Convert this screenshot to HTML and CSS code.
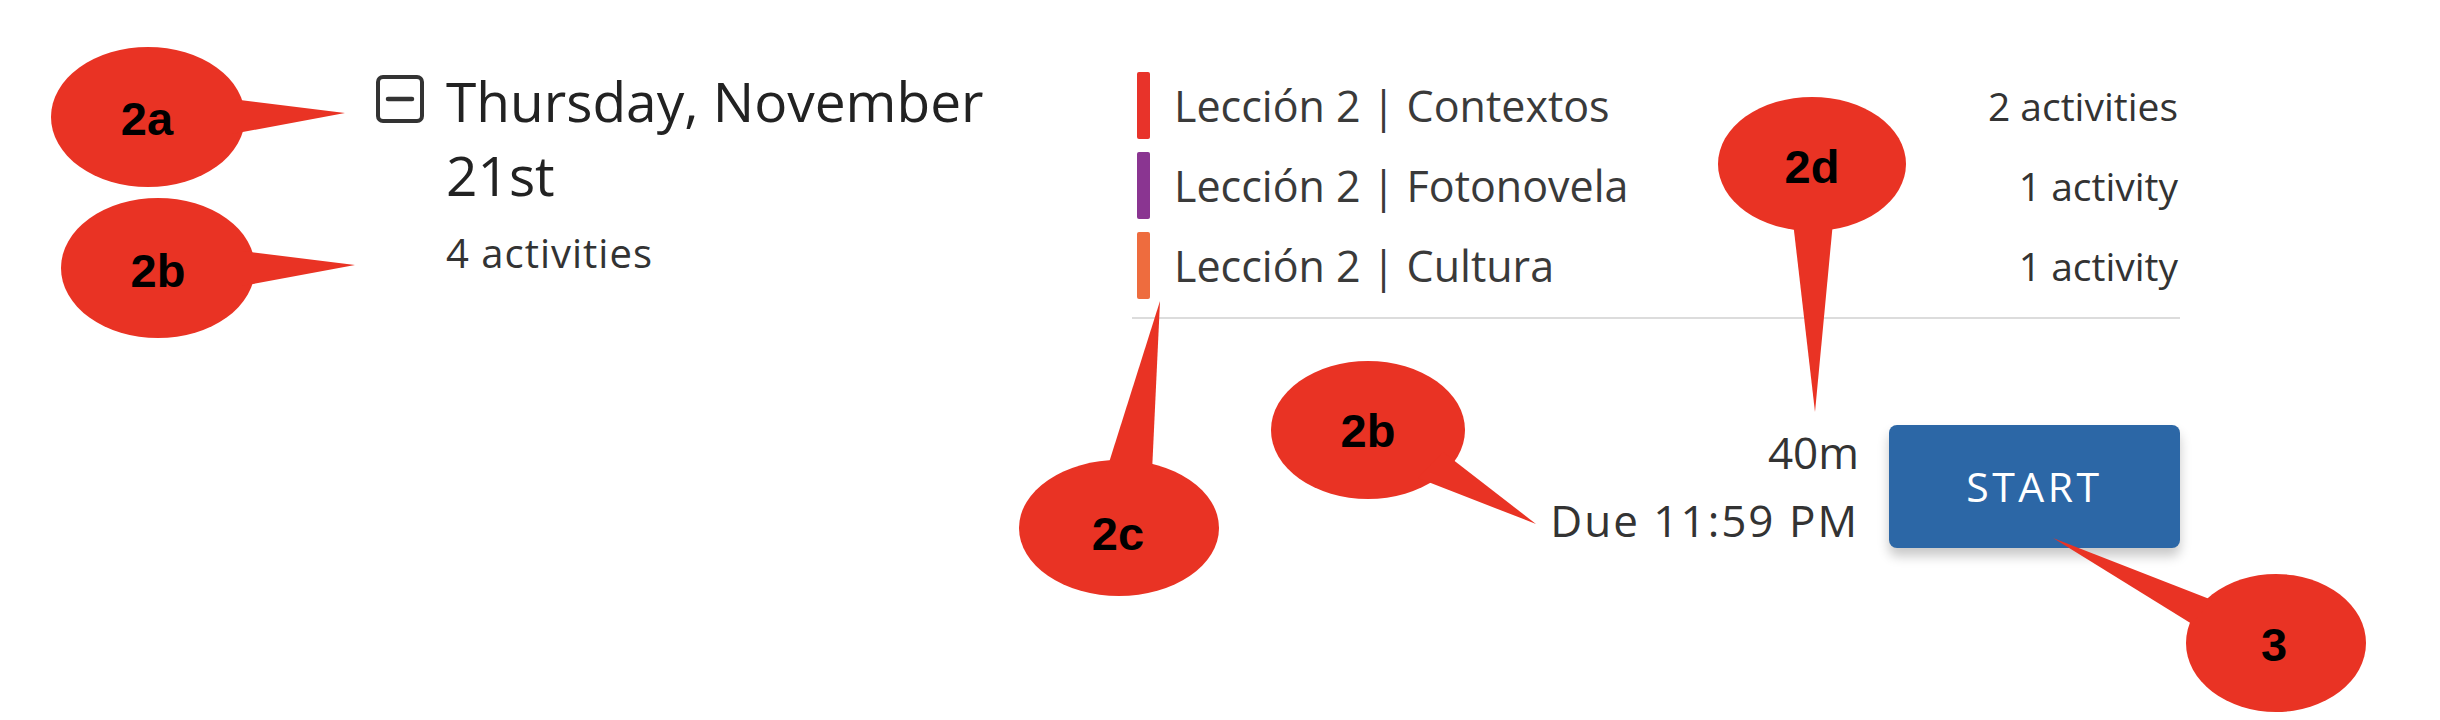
FILE: index.html
```html
<!DOCTYPE html>
<html lang="en">
<head>
<meta charset="utf-8">
<title>Assignment day</title>
<link rel="stylesheet" href="styles.css">
</head>
<body>
<div class="page">
  <section class="day">
    <div class="day-head">
      <svg class="toggle" viewBox="0 0 48 48" width="48" height="48" aria-hidden="true">
        <rect x="2" y="2" width="44" height="44" rx="5" ry="5" fill="none" stroke="#333" stroke-width="4"/>
        <line x1="12" y1="24" x2="36" y2="24" stroke="#333" stroke-width="4.5" stroke-linecap="round"/>
      </svg>
      <div class="head-text">
        <h2 class="title">Thursday, November 21st</h2>
        <div class="count">4 activities</div>
      </div>
    </div>
    <div class="lessons">
      <ul class="rows">
        <li class="row"><span class="bar bar-red"></span><span class="name">Lección 2 | Contextos</span><span class="num">2 activities</span></li>
        <li class="row"><span class="bar bar-purple"></span><span class="name">Lección 2 | Fotonovela</span><span class="num">1 activity</span></li>
        <li class="row"><span class="bar bar-orange"></span><span class="name">Lección 2 | Cultura</span><span class="num">1 activity</span></li>
      </ul>
      <div class="divider"></div>
      <div class="footer">
        <div class="meta">
          <div class="time">40m</div>
          <div class="due">Due 11:59 PM</div>
        </div>
        <button class="start">START</button>
      </div>
    </div>
  </section>

  <svg class="callouts" viewBox="0 0 2440 720" width="2440" height="720" aria-hidden="true">
    <g class="bubbles">
      <ellipse cx="148" cy="117" rx="97" ry="70"/>
      <polygon points="232,99 345,113 232,134"/>
      <ellipse cx="158" cy="268" rx="97" ry="70"/>
      <polygon points="242,251 355,265 242,286"/>
      <ellipse cx="1812" cy="164" rx="94" ry="67"/>
      <polygon points="1793,222 1815,412 1833,222"/>
      <ellipse cx="1119" cy="528" rx="100" ry="68"/>
      <polygon points="1106,472 1160,301 1152,472"/>
      <ellipse cx="1368" cy="430" rx="97" ry="69"/>
      <polygon points="1443,452 1536,524 1418,478"/>
      <ellipse cx="2276" cy="643" rx="90" ry="69"/>
      <polygon points="2212,600 2053,538 2192,624"/>
    </g>
    <g class="labels">
      <text x="147" y="135">2a</text>
      <text x="158" y="287">2b</text>
      <text x="1812" y="183">2d</text>
      <text x="1118" y="550">2c</text>
      <text x="1368" y="447">2b</text>
      <text x="2274" y="661">3</text>
    </g>
  </svg>
</div>
</body>
</html>
```

FILE: styles.css
```css
* { box-sizing: border-box; }
html, body { margin: 0; padding: 0; background: #fff; }
body {
  font-family: "Open Sans", "Liberation Sans", sans-serif;
  color: #333;
}
.page {
  position: relative;
  width: 2440px;
  height: 720px;
  overflow: hidden;
}
.day {
  display: flex;
  padding: 64px 0 0 376px;
}
.day-head {
  display: flex;
  width: 756px;
  flex: none;
}
.toggle {
  flex: none;
  margin-top: 11px;
}
.head-text {
  margin-left: 22px;
  width: 600px;
}
.title {
  margin: 0;
  font-size: 55px;
  line-height: 74px;
  font-weight: 400;
  color: #222;
}
.count {
  margin-top: 17px;
  font-size: 40px;
  line-height: 48px;
  letter-spacing: 1px;
  color: #333;
}
.lessons {
  width: 1048px;
  flex: none;
  padding-top: 8px;
}
.rows {
  list-style: none;
  margin: 0;
  padding: 0 0 0 5px;
}
.row {
  display: flex;
  align-items: center;
  height: 67px;
  margin-bottom: 13px;
}
.row:last-child { margin-bottom: 0; }
.bar {
  flex: none;
  width: 13px;
  height: 67px;
  border-radius: 2px;
}
.bar-red { background: #e8332a; }
.bar-purple { background: #8a3591; }
.bar-orange { background: #ee6c3e; }
.name {
  flex: 1;
  margin-left: 24px;
  font-size: 43px;
  color: #3a3a3a;
}
.num {
  margin-right: 2px;
  font-size: 39px;
  color: #333;
}
.divider {
  height: 2px;
  margin-top: 18px;
  background: #dcdcdc;
}
.footer {
  display: flex;
  justify-content: flex-end;
  align-items: center;
  margin-top: 99px;
}
.meta {
  text-align: right;
  font-size: 44px;
  line-height: 68px;
  color: #333;
}
.due { letter-spacing: 2px; }
.start {
  flex: none;
  width: 291px;
  height: 123px;
  margin-left: 30px;
  border: 0;
  border-radius: 8px;
  background: #2c67a6;
  color: #fff;
  font-family: "Open Sans", "Liberation Sans", sans-serif;
  font-size: 41px;
  letter-spacing: 3.5px;
  box-shadow: 0 8px 12px rgba(0, 0, 0, 0.22);
}
.callouts {
  position: absolute;
  top: 0;
  left: 0;
  pointer-events: none;
}
.bubbles { fill: #e93324; }
.labels text {
  font-family: "Liberation Sans", "Arial", sans-serif;
  font-weight: 700;
  font-size: 47px;
  fill: #000;
  text-anchor: middle;
}
```
